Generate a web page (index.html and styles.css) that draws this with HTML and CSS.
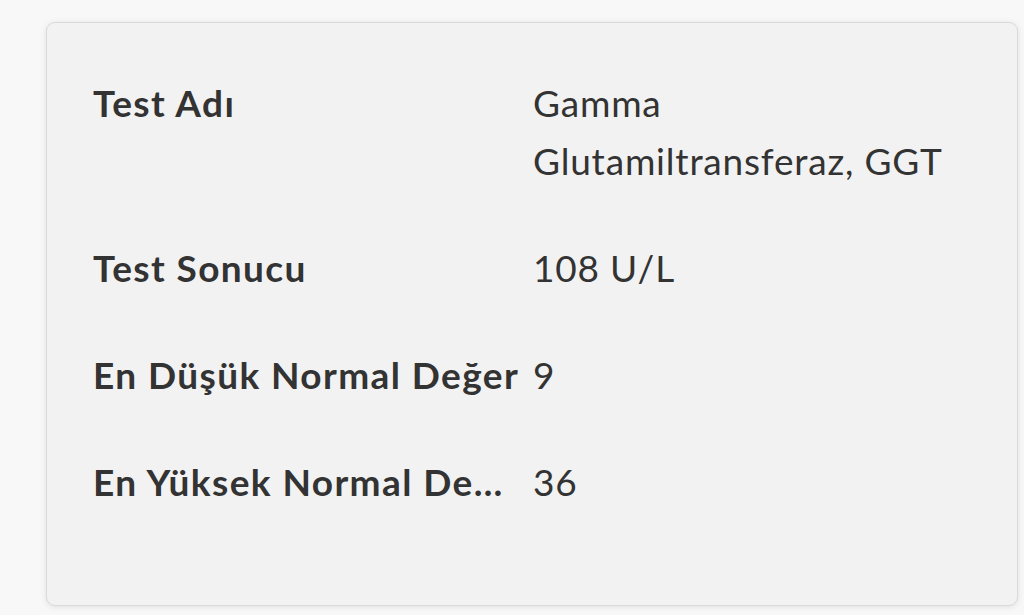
FILE: index.html
```html
<!DOCTYPE html>
<html lang="tr">
<head>
<meta charset="utf-8">
<title>Test Sonucu</title>
<link rel="stylesheet" href="styles.css">
</head>
<body>
<div class="card">
  <dl class="details">
    <dt class="label">Test Adı</dt>
    <dd class="value">Gamma<br>Glutamiltransferaz, GGT</dd>
    <dt class="label">Test Sonucu</dt>
    <dd class="value">108 U/L</dd>
    <dt class="label">En Düşük Normal Değer</dt>
    <dd class="value">9</dd>
    <dt class="label">En Yüksek Normal Değer</dt>
    <dd class="value">36</dd>
  </dl>
</div>
</body>
</html>
```

FILE: styles.css
```css
* { box-sizing: border-box; }
html, body { margin: 0; height: 100%; }
body {
  background: #f8f8f8;
  padding: 22px 6px 9px 46px;
  font-family: Lato, "Liberation Sans", sans-serif;
  color: #333333;
}
.card {
  height: 584px;
  background: #f2f2f2;
  border: 1px solid #dadada;
  border-radius: 9px;
  box-shadow: 0 1px 6px rgba(0, 0, 0, 0.10);
  padding: 51px 20px 0 46px;
}
.details {
  margin: 0;
  display: grid;
  grid-template-columns: 440px 1fr;
  row-gap: 49px;
  font-size: 37px;
  line-height: 58px;
}
.label {
  font-weight: 700;
  letter-spacing: 1.4px;
  white-space: nowrap;
  overflow: hidden;
  text-overflow: ellipsis;
  padding-right: 13px;
}
.value {
  margin: 0;
  font-weight: 400;
  letter-spacing: 0.8px;
}
```
